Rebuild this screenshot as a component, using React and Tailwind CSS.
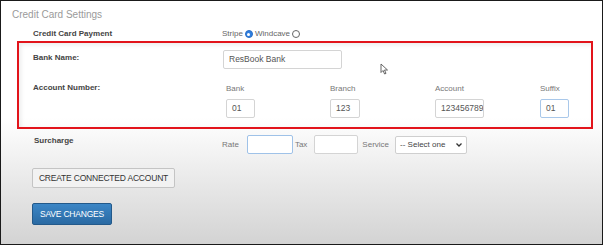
import React from "react";

function Input({ value = "", className = "" }) {
  return (
    <div
      className={`h-[19px] rounded-[2px] border bg-white px-[5px] text-[8.5px] leading-[17px] text-[#555] overflow-hidden whitespace-nowrap ${className}`}
    >
      {value}
    </div>
  );
}

function Radio({ checked }) {
  return checked ? (
    <span className="inline-flex h-[8px] w-[8px] items-center justify-center rounded-full bg-[#2f7fe0] border border-[#2a6fc6]">
      <span className="h-[3px] w-[3px] rounded-full bg-white" />
    </span>
  ) : (
    <span className="inline-block h-[8px] w-[8px] rounded-full border border-[#666] bg-white" />
  );
}

export default function App() {
  return (
    <div
      className="relative w-[603px] h-[245px] overflow-hidden border border-[#1a1a1a] bg-[linear-gradient(to_bottom,#ffffff_0%,#ffffff_48%,#d3d3d3_100%)] text-[#444]"
      style={{ fontFamily: '"Liberation Sans", Arial, sans-serif' }}
    >
      <div className="pl-[11px] pt-[8px] text-[10px] leading-[12px] text-[#9a9a9a]">
        Credit Card Settings
      </div>

      <div className="mt-[7px] flex items-center h-[12px]">
        <div className="w-[221px] pl-[32px] text-[8px] font-bold text-[#444]">Credit Card Payment</div>
        <div className="flex items-center gap-[2px] text-[8px] text-[#666]">
          <span>Stripe</span>
          <Radio checked />
          <span>Windcave</span>
          <Radio />
        </div>
      </div>

      <div className="ml-[16px] mt-[1px] w-[576px] h-[88px] border-2 border-[#e2141b] shadow-[inset_2px_2px_4px_rgba(0,0,0,0.08)]">
        <div className="flex items-start pt-[7px]">
          <div className="w-[204px] pl-[14px] pt-[2px] text-[8px] font-bold text-[#444]">Bank Name:</div>
          <Input value="ResBook Bank" className="w-[119px] border-[#d4d4d4]" />
        </div>
        <div className="flex items-start mt-[12px]">
          <div className="w-[207px] pl-[14px] pt-[1px] text-[8px] font-bold text-[#444]">Account Number:</div>
          <div className="flex">
            <div className="w-[104px]">
              <div className="text-[8px] leading-[10px] text-[#777] pt-[3px]">Bank</div>
              <Input value="01" className="mt-[5px] w-[29px] border-[#d4d4d4]" />
            </div>
            <div className="w-[105px]">
              <div className="text-[8px] leading-[10px] text-[#777] pt-[3px]">Branch</div>
              <Input value="123" className="mt-[5px] w-[30px] border-[#d4d4d4]" />
            </div>
            <div className="w-[105px]">
              <div className="text-[8px] leading-[10px] text-[#777] pt-[3px]">Account</div>
              <Input value="123456789" className="mt-[5px] w-[49px] border-[#d4d4d4] px-[3px]" />
            </div>
            <div className="w-[40px]">
              <div className="text-[8px] leading-[10px] text-[#777] pt-[3px]">Suffix</div>
              <Input value="01" className="mt-[5px] w-[29px] border-[#a9c8ea]" />
            </div>
          </div>
        </div>
      </div>

      <div className="flex items-start mt-[5px]">
        <div className="w-[221px] pl-[33px] pt-[1px] text-[8px] font-bold text-[#444]">Surcharge</div>
        <div className="flex items-center pt-[1px] text-[8px] text-[#777]">
          <span>Rate</span>
          <div className="ml-[8px] h-[19px] w-[46px] rounded-[2px] border border-[#9fc2e8] bg-white" />
          <span className="ml-[2px]">Tax</span>
          <div className="ml-[7px] h-[19px] w-[44px] rounded-[2px] border border-[#d4d4d4] bg-white" />
          <span className="ml-[4px]">Service</span>
          <div className="ml-[6px] flex h-[18px] w-[72px] items-center justify-between rounded-[2px] border border-[#cfcfcf] bg-white px-[4px] text-[8px] text-[#444]">
            <span>-- Select one</span>
            <svg width="6" height="4" viewBox="0 0 6 4">
              <path d="M0.5 0.5 L3 3 L5.5 0.5" stroke="#333" strokeWidth="1.3" fill="none" />
            </svg>
          </div>
        </div>
      </div>

      <div className="ml-[31px] mt-[14px] flex h-[20px] w-[143px] items-center justify-center rounded-[2px] border border-[#c4c4c4] bg-[#f2f2f2] text-[8.5px] text-[#333] tracking-[-0.2px]">
        CREATE CONNECTED ACCOUNT
      </div>

      <div className="ml-[31px] mt-[15px] flex h-[22px] w-[80px] items-center justify-center rounded-[2px] border border-[#23598a] bg-[linear-gradient(to_bottom,#3c86c6,#2a6aa3)] text-[8.5px] text-white tracking-[-0.2px]">
        SAVE CHANGES
      </div>

      <svg className="absolute left-[379px] top-[62px]" width="9" height="12" viewBox="0 0 9 12">
        <path d="M1 1 L1 9.5 L3 7.5 L4.6 11 L6 10.4 L4.5 7 L7.5 7 Z" fill="white" stroke="#555" strokeWidth="0.9" />
      </svg>
    </div>
  );
}
